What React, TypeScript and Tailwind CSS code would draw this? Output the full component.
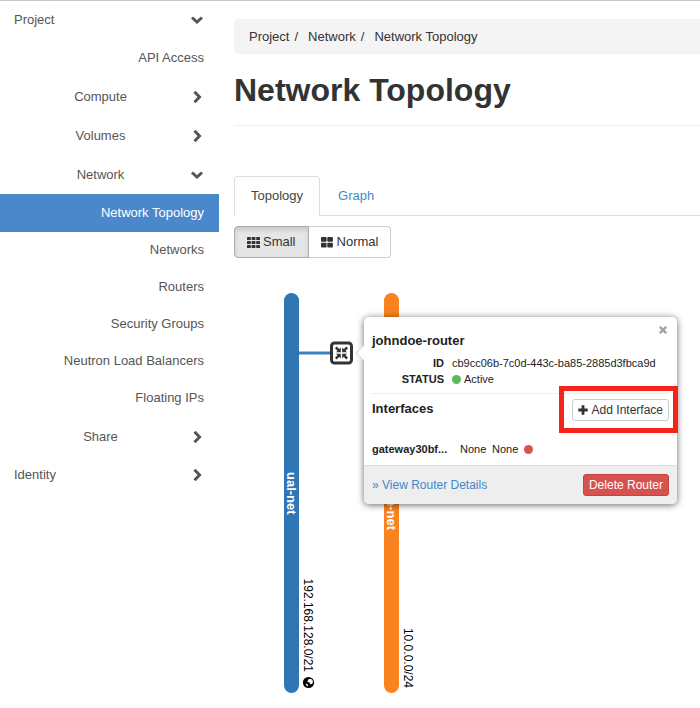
import React from "react";

const childLinks = ["Networks", "Routers", "Security Groups", "Neutron Load Balancers", "Floating IPs"];

function Chevron({ open }: { open: boolean }) {
  return (
    <svg viewBox="0 0 12 12" className="h-3 w-3 shrink-0" fill="none" stroke="currentColor" strokeWidth="3" aria-hidden="true">
      {open ? <path d="M1 3.500 6 8l5-4.500" /> : <path d="M3.500 .8 8.500 6l-5 5.200" />}
    </svg>
  );
}

function Group({ label, open = false, nested = false }: { label: string; open?: boolean; nested?: boolean }) {
  return (
    <button type="button" aria-expanded={open} className={nested ? "flex h-[39px] w-full items-center pr-4 pl-3.5" : "flex h-[38px] w-full items-center pr-4 pl-3.5"}>
      <span className={nested ? "flex-1 pr-1 text-center" : "flex-1 text-left"}>{label}</span>
      <Chevron open={open} />
    </button>
  );
}

function Sidebar() {
  return (
    <nav className="w-[219px] shrink-0 text-[#555]">
      <Group label="Project" open />
      <a href="#api" className="flex h-[38px] items-center justify-end pr-[15px]">API Access</a>
      <Group label="Compute" nested />
      <Group label="Volumes" nested />
      <Group label="Network" open nested />
      <a href="#topology" aria-current="page" className="flex h-[38px] items-center justify-end bg-[#4b88cb] pr-[15px] text-white">
        Network Topology
      </a>
      {childLinks.map((label) => (
        <a key={label} href="#network" className="flex h-[37px] items-center justify-end pr-[15px] pb-0.5">
          {label}
        </a>
      ))}
      <Group label="Share" nested />
      <Group label="Identity" />
    </nav>
  );
}

function SmallIcon() {
  return (
    <svg viewBox="0 0 13 11" className="h-[11px] w-[13px]" fill="currentColor" aria-hidden="true">
      {[0, 4, 8].map((y) =>
        [0, 4.6, 9.2].map((x) => <rect key={`${x}-${y}`} x={x} y={y} width="3.800" height="3" rx=".6" />)
      )}
    </svg>
  );
}

function NormalIcon() {
  return (
    <svg viewBox="0 0 12 11" className="h-[11px] w-3" fill="currentColor" aria-hidden="true">
      {[0, 5.8].map((y) =>
        [0, 6.3].map((x) => <rect key={`${x}-${y}`} x={x} y={y} width="5.600" height="4.800" rx=".8" />)
      )}
    </svg>
  );
}

function Diagram() {
  return (
    <svg width="200" height="410" className="block" fontFamily="Liberation Sans, Arial, sans-serif" role="img" aria-label="Network diagram">
      <rect x="50" y="5" width="15" height="400" rx="7.500" fill="#2f76b5" />
      <rect x="150" y="5" width="15" height="400" rx="7.500" fill="#f9831f" />
      <path d="M65 65h32" stroke="#3f80ba" strokeWidth="3" />
      <rect x="97.500" y="55" width="20" height="20" rx="3" fill="#fff" stroke="#333" strokeWidth="3" />
      <path d="m101.800 59.300 3.500 3.500M113.200 59.300l-3.500 3.500M101.800 70.700l3.500-3.500M113.200 70.700l-3.500-3.500" stroke="#333" strokeWidth="2.400" />
      <path d="M106.800 59.500v4.800h-4.800zM108.200 59.500v4.800h4.800zM106.800 70.500v-4.800h-4.800zM108.200 70.500v-4.800h4.800z" fill="#333" />
      <text transform="translate(53 184) rotate(90)" fontSize="13" fontWeight="bold" fill="#fff">ual-net</text>
      <text transform="translate(153 242) rotate(90)" textAnchor="end" fontSize="13" fontWeight="bold" fill="#fff">private-net</text>
      <text transform="translate(70 384) rotate(90)" textAnchor="end" fontSize="12" fill="#000">192.168.128.0/21</text>
      <text transform="translate(170 400) rotate(90)" textAnchor="end" fontSize="12" fill="#000">10.0.0.0/24</text>
      <circle cx="74.500" cy="394.500" r="5.600" fill="#000" />
      <path d="M74 391.500l3-.8 2 2.300-.5 2.500-2 1-1-2-2-.5zM71.500 395.500l2 .5.500 2-1 .5z" fill="#fff" />
    </svg>
  );
}

function RouterPopup() {
  return (
    <section className="absolute top-[29px] left-[130px] w-[313px] rounded-[5px] bg-white text-[11px] text-[#222] shadow-[0_1px_7px_rgba(0,0,0,0.6)]">
      <svg viewBox="0 0 9 16" className="absolute top-7 -left-[9px] h-4 w-[9px]" aria-hidden="true">
        <path d="M9 0 0 8l9 8z" fill="#e2e2e2" />
        <path d="M9 1.500 2 8l7 6.500z" fill="#fff" />
      </svg>
      <button type="button" aria-label="Close" className="absolute top-2 right-2.5 flex h-2.5 w-2 items-center">
        <svg viewBox="0 0 8 8" className="h-2 w-2" stroke="#a3a3a3" strokeWidth="2.400" aria-hidden="true">
          <path d="m.8.8 6.400 6.400M7.200.8.8 7.200" />
        </svg>
      </button>
      <div className="px-2 pt-4">
        <h2 className="text-[13px] leading-4 font-bold">johndoe-router</h2>
        <dl className="mt-1.5 grid grid-cols-[72px_1fr] gap-x-2 leading-4">
          <dt className="text-right font-bold">ID</dt>
          <dd className="whitespace-nowrap">cb9cc06b-7c0d-443c-ba85-2885d3fbca9d</dd>
          <dt className="text-right font-bold">STATUS</dt>
          <dd className="flex items-center gap-[3px]">
            <span className="h-[9px] w-[9px] rounded-full bg-[#5cb85c]" />
            Active
          </dd>
        </dl>
        <div className="mt-1.5 flex justify-between border-t border-[#eee] pt-[5px]">
          <h3 className="pt-0.5 text-[13px] leading-4 font-bold">Interfaces</h3>
          <div className="relative">
            <button type="button" className="flex h-[22px] items-center gap-1 rounded-[3px] border border-[#ccc] bg-white px-[5px] text-xs whitespace-nowrap text-[#333]">
              <svg viewBox="0 0 10 10" className="h-2.5 w-2.5" stroke="currentColor" strokeWidth="2.800" aria-hidden="true">
                <path d="M5 .3v9.400M.3 5h9.400" />
              </svg>
              Add Interface
            </button>
            <span className="pointer-events-none absolute -top-[13px] -right-[9px] -bottom-3 -left-[13px] border-[5px] border-[#f52419]" />
          </div>
        </div>
        <div className="mt-5 flex items-center pb-2 leading-4">
          <strong className="w-[88px]">gateway30bf...</strong>
          <span className="w-8">None</span>
          <span className="w-8">None</span>
          <span className="h-[9px] w-[9px] rounded-full bg-[#d9534f]" />
        </div>
      </div>
      <footer className="flex items-center justify-between rounded-b-[5px] border-t border-[#ddd] bg-[#eee] px-2 py-2 text-xs">
        <a href="#details" className="text-[#4587ca]">» View Router Details</a>
        <button type="button" className="h-[22px] rounded-[3px] border border-[#c9403c] bg-[#d65250] px-[5px] whitespace-nowrap text-white">
          Delete Router
        </button>
      </footer>
    </section>
  );
}

export default function App() {
  return (
    <div className="flex overflow-hidden border-t border-[#c8c8c8] bg-white font-['Liberation_Sans',Arial,sans-serif] text-[13px] leading-5 text-[#333]">
      <Sidebar />
      <main className="min-w-0 flex-1 pt-[18px] pl-[15px]">
        <nav aria-label="Breadcrumb" className="flex h-[35px] items-center gap-[5px] rounded-l bg-[#f4f4f4] px-[15px]">
          <a href="#project">Project</a>
          <span className="mr-[5px]">/</span>
          <a href="#network">Network</a>
          <span className="mr-[5px]">/</span>
          <span>Network Topology</span>
        </nav>
        <h1 className="mt-4 border-b border-[#eee] pb-[15px] text-[32px] leading-10 font-bold">Network Topology</h1>
        <div role="tablist" className="mt-[50px] flex h-10 border-b border-[#ddd]">
          <button type="button" role="tab" aria-selected="true" className="-mb-px h-10 rounded-t border border-b-0 border-[#ddd] bg-white px-4 pb-0.5 text-[#444]">
            Topology
          </button>
          <button type="button" role="tab" aria-selected="false" className="ml-0.5 px-4 text-[#428bca]">
            Graph
          </button>
        </div>
        <div className="mt-2.5 flex">
          <button type="button" aria-pressed="true" className="flex h-8 items-center gap-[3px] rounded-l border border-[#adadad] bg-[#e6e6e6] px-3 shadow-[inset_0_3px_5px_rgba(0,0,0,0.125)]">
            <SmallIcon />
            Small
          </button>
          <button type="button" aria-pressed="false" className="flex h-8 items-center gap-1 rounded-r border border-l-0 border-[#ccc] bg-white px-3">
            <NormalIcon />
            Normal
          </button>
        </div>
        <div className="relative mt-[30px]">
          <Diagram />
          <RouterPopup />
        </div>
      </main>
    </div>
  );
}
